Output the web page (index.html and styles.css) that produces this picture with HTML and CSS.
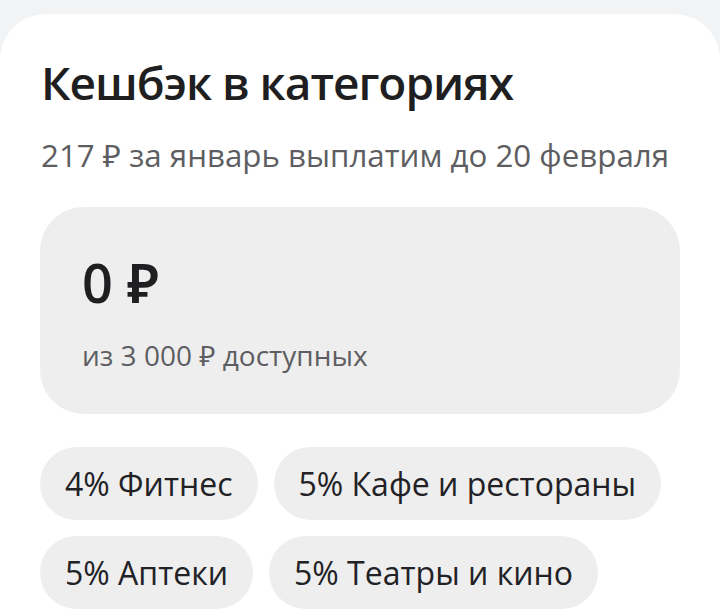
FILE: index.html
```html
<!DOCTYPE html>
<html lang="ru">
<head>
<meta charset="utf-8">
<link rel="stylesheet" href="styles.css">
</head>
<body>
<div class="card">
  <h1 class="title">Кешбэк в категориях</h1>
  <p class="subtitle">217 ₽ за январь выплатим до 20 февраля</p>
  <div class="balance">
    <div class="amount">0 ₽</div>
    <div class="limit">из 3 000 ₽ доступных</div>
  </div>
  <div class="chips">
    <span class="chip">4% Фитнес</span>
    <span class="chip">5% Кафе и рестораны</span>
    <span class="chip">5% Аптеки</span>
    <span class="chip">5% Театры и кино</span>
  </div>
</div>
</body>
</html>
```
FILE: styles.css
```css
html, body {
  margin: 0;
  padding: 0;
  background: #f2f3f5;
  font-family: "Open Sans", "Noto Sans", sans-serif;
  color: #1f1f22;
  overflow: hidden;
  height: 611px;
}
.card {
  margin-top: 14px;
  background: #ffffff;
  border-radius: 46px 46px 0 0;
  padding: 40px 40px 0 40px;
  height: 597px;
  box-sizing: border-box;
  overflow: hidden;
}
.title {
  margin: 0 0 0 1px;
  font-size: 46px;
  font-weight: 600;
  line-height: 56px;
  letter-spacing: -1px;
}
.subtitle {
  margin: 25px 0 0 1px;
  font-size: 31.3px;
  line-height: 40px;
  color: #5e5e62;
  white-space: nowrap;
}
.balance {
  margin-top: 32px;
  background: #eeeeee;
  border-radius: 44px;
  height: 207px;
  padding: 43px 42px 0 42px;
  box-sizing: border-box;
}
.amount {
  font-size: 54px;
  font-weight: 600;
  line-height: 64px;
}
.limit {
  margin-top: 23px;
  font-size: 28px;
  line-height: 36px;
  color: #5e5e62;
}
.chips {
  margin-top: 33px;
  display: flex;
  flex-wrap: wrap;
  gap: 16px;
}
.chip {
  background: #eeeeee;
  border-radius: 37px;
  height: 73px;
  padding: 0 25px;
  display: flex;
  align-items: center;
  font-size: 32px;
  color: #222226;
}
```
